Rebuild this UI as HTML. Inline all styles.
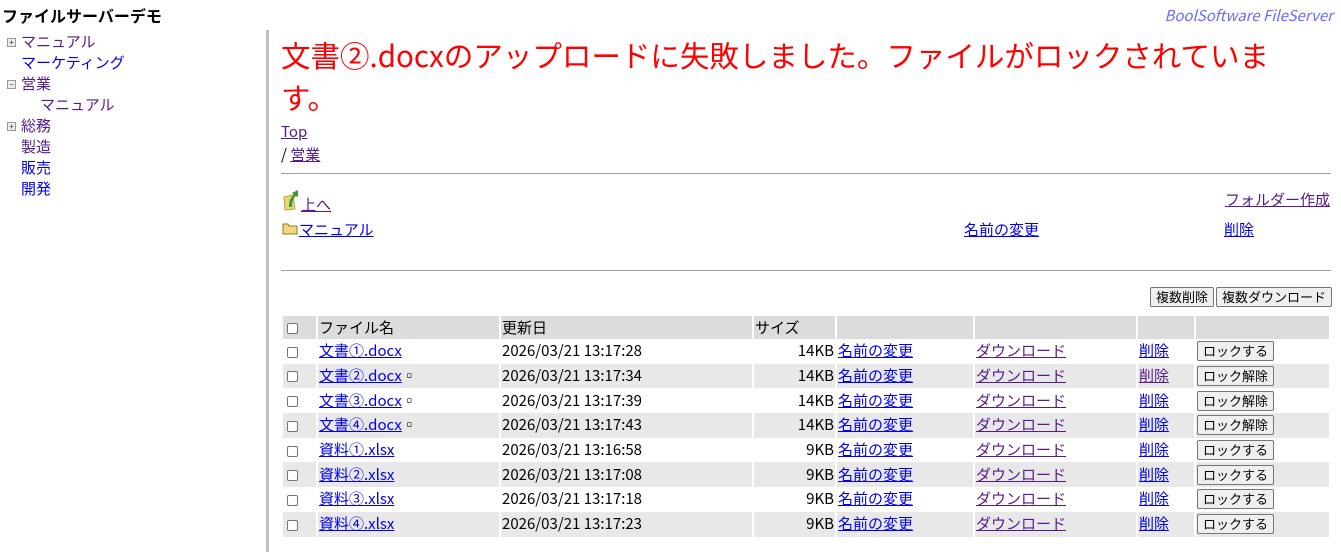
<!DOCTYPE html>
<html><head><meta charset="utf-8"><style>
*{margin:0;padding:0;box-sizing:border-box}
body{width:1341px;height:552px;overflow:hidden;background:#fff;font-family:"Noto Sans CJK JP","Liberation Sans",sans-serif;font-size:15px;color:#000;position:relative}
a{color:#0000ee;text-decoration:underline}
a.v{color:#551a8b}
.abs{position:absolute;white-space:nowrap;line-height:20px}
.pm{display:inline-block;width:9px;height:9px;border:1px solid #999;background:#eee;position:absolute;left:7px;font-size:8px;line-height:7px;text-align:center;color:#333;font-family:"Liberation Sans",sans-serif}
.bar{position:absolute;left:266px;top:30px;width:3px;height:522px;background:#c0c0c0}
.msg{position:absolute;left:281px;top:34px;width:1010px;color:#f00;font-size:29.5px;line-height:42px}
hr{position:absolute;left:281px;width:1050px;border:0;border-top:1px solid #a0a0a0}
table{position:absolute;left:281px;top:316px;width:1050px;border-collapse:separate;border-spacing:2px 0}
td{height:24.7px;padding:0 1px;white-space:nowrap;vertical-align:middle;line-height:18px}
tr.h td{background:#dcdcdc;height:23px}
tr.g td{background:#e8e8e8}
.btn{display:inline-block;border:1px solid #767676;background:#efefef;font-size:13px;padding:0 5px;height:20px;line-height:18px;border-radius:2px;color:#000}
.cb{display:inline-block;width:11px;height:11px;border:1px solid #767676;border-radius:2px;background:#fff;margin-left:3px;vertical-align:middle}
.r{text-align:right}
</style></head><body>
<div class="abs" style="left:2px;top:5px;font-weight:bold;font-size:16px">ファイルサーバーデモ</div>
<div class="abs" style="right:8px;top:6px;font-style:italic;color:#6b6bff;font-size:15px">BoolSoftware FileServer</div>

<span class="pm" style="top:38px">+</span><a class="abs v" style="left:21px;top:32px;text-decoration:none">マニュアル</a>
<a class="abs" style="left:21px;top:53px;text-decoration:none">マーケティング</a>
<span class="pm" style="top:80px">−</span><a class="abs v" style="left:21px;top:74px;text-decoration:none">営業</a>
<a class="abs v" style="left:40px;top:95px;text-decoration:none">マニュアル</a>
<span class="pm" style="top:122px">+</span><a class="abs v" style="left:21px;top:116px;text-decoration:none">総務</a>
<a class="abs v" style="left:21px;top:137px;text-decoration:none">製造</a>
<a class="abs" style="left:21px;top:158px;text-decoration:none">販売</a>
<a class="abs" style="left:21px;top:179px;text-decoration:none">開発</a>

<div class="bar"></div>
<div class="msg">文書②.docxのアップロードに失敗しました。ファイルがロックされています。</div>
<a class="abs v" style="left:281px;top:122px">Top</a>
<div class="abs" style="left:281px;top:145px">/ <a class="v">営業</a></div>
<hr style="top:173px">
<svg class="abs" style="left:283px;top:189px" width="17" height="22" viewBox="0 0 17 22"><path d="M1 8 L10 6 L12 20 L2 21Z" fill="#e8d77a" stroke="#b9a640"/><path d="M6 18 C6 11 8 8 11 6 L9 4 L15 1 L15 8 L13 7 C10 9 9 13 9 18Z" fill="#3c9a2a"/></svg>
<a class="abs v" style="left:301px;top:195px">上へ</a>
<svg class="abs" style="left:282px;top:222px" width="16" height="13" viewBox="0 0 16 13"><path d="M1 2 H6 L7 4 H15 V12 H1Z" fill="#f2d77c" stroke="#9a7a2a"/></svg>
<a class="abs" style="left:299px;top:220px">マニュアル</a>
<a class="abs" style="left:964px;top:220px">名前の変更</a>
<a class="abs v" style="left:1225px;top:190px">フォルダー作成</a>
<a class="abs" style="left:1224px;top:220px">削除</a>
<hr style="top:270px">
<span class="abs btn" style="left:1150px;top:287px">複数削除</span>
<span class="abs btn" style="left:1216px;top:287px">複数ダウンロード</span>

<table>
<tr class="h"><td style="width:33px"><span class="cb"></span></td><td style="width:181px">ファイル名</td><td style="width:251px">更新日</td><td style="width:81px">サイズ</td><td style="width:136px"></td><td style="width:161px"></td><td style="width:56px"></td><td></td></tr>
<tr><td><span class="cb"></span></td><td><a>文書①.docx</a></td><td>2026/03/21 13:17:28</td><td class="r">14KB</td><td><a>名前の変更</a></td><td><a class="v">ダウンロード</a></td><td><a>削除</a></td><td><span class="btn">ロックする</span></td></tr>
<tr class="g"><td><span class="cb"></span></td><td><a>文書②.docx</a>▫</td><td>2026/03/21 13:17:34</td><td class="r">14KB</td><td><a>名前の変更</a></td><td><a class="v">ダウンロード</a></td><td><a class="v">削除</a></td><td><span class="btn">ロック解除</span></td></tr>
<tr><td><span class="cb"></span></td><td><a>文書③.docx</a>▫</td><td>2026/03/21 13:17:39</td><td class="r">14KB</td><td><a>名前の変更</a></td><td><a class="v">ダウンロード</a></td><td><a>削除</a></td><td><span class="btn">ロック解除</span></td></tr>
<tr class="g"><td><span class="cb"></span></td><td><a>文書④.docx</a>▫</td><td>2026/03/21 13:17:43</td><td class="r">14KB</td><td><a>名前の変更</a></td><td><a class="v">ダウンロード</a></td><td><a>削除</a></td><td><span class="btn">ロック解除</span></td></tr>
<tr><td><span class="cb"></span></td><td><a>資料①.xlsx</a></td><td>2026/03/21 13:16:58</td><td class="r">9KB</td><td><a>名前の変更</a></td><td><a class="v">ダウンロード</a></td><td><a>削除</a></td><td><span class="btn">ロックする</span></td></tr>
<tr class="g"><td><span class="cb"></span></td><td><a>資料②.xlsx</a></td><td>2026/03/21 13:17:08</td><td class="r">9KB</td><td><a>名前の変更</a></td><td><a class="v">ダウンロード</a></td><td><a>削除</a></td><td><span class="btn">ロックする</span></td></tr>
<tr><td><span class="cb"></span></td><td><a>資料③.xlsx</a></td><td>2026/03/21 13:17:18</td><td class="r">9KB</td><td><a>名前の変更</a></td><td><a class="v">ダウンロード</a></td><td><a>削除</a></td><td><span class="btn">ロックする</span></td></tr>
<tr class="g"><td><span class="cb"></span></td><td><a>資料④.xlsx</a></td><td>2026/03/21 13:17:23</td><td class="r">9KB</td><td><a>名前の変更</a></td><td><a class="v">ダウンロード</a></td><td><a>削除</a></td><td><span class="btn">ロックする</span></td></tr>
</table>
</body></html>
